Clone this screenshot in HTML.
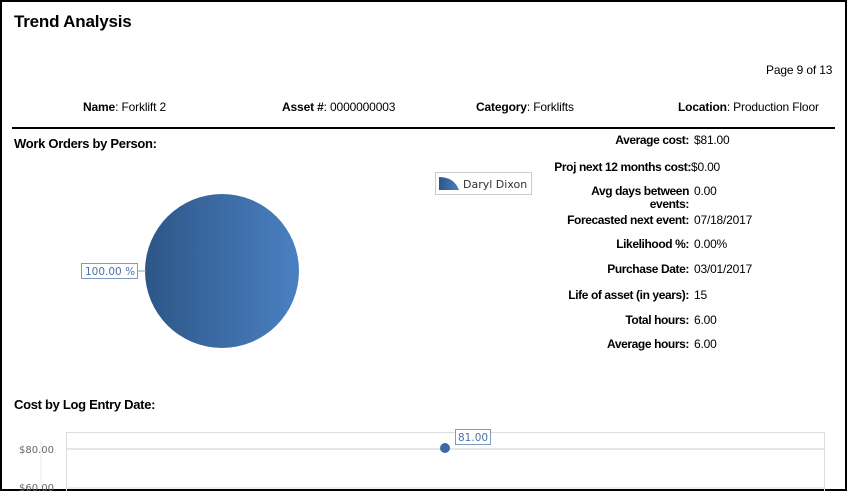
<!DOCTYPE html>
<html><head><style>
body{margin:0;width:847px;height:491px;overflow:hidden;background:#fff;font-family:"Liberation Sans",Arial,sans-serif;color:#000}
.frame{position:absolute;left:0;top:0;width:843px;height:487px;border:2px solid #000}
.a{position:absolute;white-space:nowrap}
.b{font-weight:bold}
.s{font-size:12px;letter-spacing:-0.15px}
.lab{position:absolute;right:158px;text-align:right;font-size:12px;font-weight:bold;line-height:13px;letter-spacing:-0.4px}
.val{position:absolute;left:694px;font-size:12px;line-height:13px;letter-spacing:-0.2px}
</style></head><body>
<div class="frame"></div>
<div class="a b" style="left:14px;top:12px;font-size:17px;letter-spacing:-0.2px">Trend Analysis</div>
<div class="a s" style="left:766px;top:63px">Page 9 of 13</div>
<div class="a s" style="left:83px;top:100px"><b>Name</b>: Forklift 2</div>
<div class="a s" style="left:282px;top:100px"><b>Asset #</b>: 0000000003</div>
<div class="a s" style="left:476px;top:100px"><b>Category</b>: Forklifts</div>
<div class="a s" style="left:678px;top:100px"><b>Location</b>: Production Floor</div>
<div class="a" style="left:12px;top:127px;width:823px;height:2px;background:#000"></div>
<div class="a b" style="left:14px;top:136px;font-size:13px;letter-spacing:-0.3px">Work Orders by Person:</div>
<div class="lab" style="top:134px">Average cost:</div><div class="val" style="top:134px">$81.00</div>
<div class="lab" style="top:161px;right:156px">Proj next 12 months cost:</div><div class="val" style="top:161px;left:691px">$0.00</div>
<div class="lab" style="top:185px">Avg days between<br>events:</div><div class="val" style="top:185px">0.00</div>
<div class="lab" style="top:214px">Forecasted next event:</div><div class="val" style="top:214px">07/18/2017</div>
<div class="lab" style="top:238px">Likelihood %:</div><div class="val" style="top:238px">0.00%</div>
<div class="lab" style="top:263px">Purchase Date:</div><div class="val" style="top:263px">03/01/2017</div>
<div class="lab" style="top:289px">Life of asset (in years):</div><div class="val" style="top:289px">15</div>
<div class="lab" style="top:314px">Total hours:</div><div class="val" style="top:314px">6.00</div>
<div class="lab" style="top:338px">Average hours:</div><div class="val" style="top:338px">6.00</div>
<svg class="a" style="left:0;top:0" width="847" height="491">
<defs><linearGradient id="g" x1="0" x2="1" y1="0" y2="0"><stop offset="0" stop-color="#2d5687"/><stop offset="1" stop-color="#4a80c2"/></linearGradient></defs>
<circle cx="222" cy="271" r="77" fill="url(#g)"/>
<line x1="138" y1="271" x2="146" y2="271" stroke="#7f9cc0"/>
<rect x="81.5" y="263.5" width="56" height="15" fill="#fff" stroke="#7f9cc0"/>
<text x="85" y="275" font-family="DejaVu Sans" font-size="10.5" fill="#4a72a8">100.00 %</text>
<rect x="435.5" y="172.5" width="96" height="22" fill="#fff" stroke="#ccc"/>
<path d="M439 177 Q454 177 459 190 L439 190Z" fill="url(#g)"/>
<text x="463" y="188" font-family="DejaVu Sans" font-size="11" fill="#333">Daryl Dixon</text>
<rect x="66.5" y="432.5" width="758" height="70" fill="none" stroke="#ddd"/>
<line x1="66" y1="449" x2="825" y2="449" stroke="#ddd" stroke-width="1.5"/>
<line x1="66" y1="488" x2="825" y2="488" stroke="#ddd"/>
<line x1="41" y1="440" x2="41" y2="488" stroke="#eee"/>
<text x="54" y="453" text-anchor="end" font-family="DejaVu Sans" font-size="10" fill="#666">$80.00</text>
<text x="54" y="491" text-anchor="end" font-family="DejaVu Sans" font-size="10" fill="#666">$60.00</text>
<circle cx="445" cy="448" r="5" fill="#3d6aa6"/>
<rect x="455.5" y="429.5" width="35" height="15" fill="#fff" stroke="#7f9cc0"/>
<text x="458" y="441" font-family="DejaVu Sans" font-size="10.5" fill="#4a72a8">81.00</text>
</svg>
<div class="a b" style="left:14px;top:397px;font-size:13px;letter-spacing:-0.3px">Cost by Log Entry Date:</div>
</body></html>
